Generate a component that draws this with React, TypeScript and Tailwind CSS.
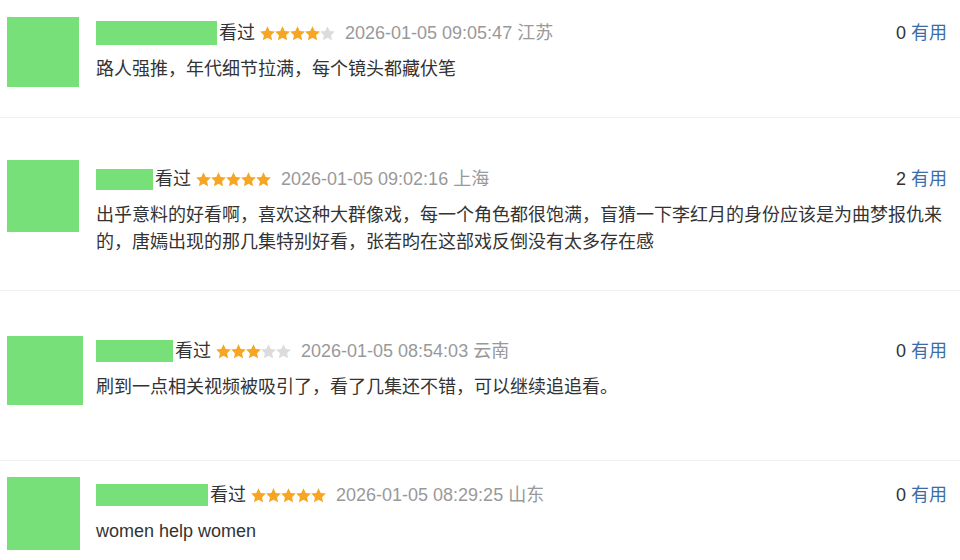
import React from 'react';

interface Review {
  nameWidth: number;
  nameHeight: number;
  avatarW: number;
  avatarH: number;
  rating: number;
  time: string;
  region: string;
  text: string;
  useful: number;
  padTop: number;
  padBottom: number;
  contentOffset: number;
  divider: boolean;
}

const reviews: Review[] = [
  {
    nameWidth: 121,
    nameHeight: 24,
    avatarW: 72,
    avatarH: 70,
    rating: 4,
    time: '2026-01-05 09:05:47',
    region: '江苏',
    text: '路人强推，年代细节拉满，每个镜头都藏伏笔',
    useful: 0,
    padTop: 17,
    padBottom: 30,
    contentOffset: 4,
    divider: true,
  },
  {
    nameWidth: 57,
    nameHeight: 21,
    avatarW: 72,
    avatarH: 72,
    rating: 5,
    time: '2026-01-05 09:02:16',
    region: '上海',
    text: '出乎意料的好看啊，喜欢这种大群像戏，每一个角色都很饱满，盲猜一下李红月的身份应该是为曲梦报仇来的，唐嫣出现的那几集特别好看，张若昀在这部戏反倒没有太多存在感',
    useful: 2,
    padTop: 42,
    padBottom: 34,
    contentOffset: 7,
    divider: true,
  },
  {
    nameWidth: 77,
    nameHeight: 22,
    avatarW: 76,
    avatarH: 69,
    rating: 3,
    time: '2026-01-05 08:54:03',
    region: '云南',
    text: '刷到一点相关视频被吸引了，看了几集还不错，可以继续追追看。',
    useful: 0,
    padTop: 45,
    padBottom: 55,
    contentOffset: 3,
    divider: true,
  },
  {
    nameWidth: 112,
    nameHeight: 22,
    avatarW: 73,
    avatarH: 73,
    rating: 5,
    time: '2026-01-05 08:29:25',
    region: '山东',
    text: 'women help women',
    useful: 0,
    padTop: 16,
    padBottom: 12,
    contentOffset: 6,
    divider: false,
  },
];

function Star({ on }: { on: boolean }) {
  return (
    <svg width="15" height="15" viewBox="1.5 1.5 21 21" className="shrink-0">
      <path
        d="M12 1.8l3.1 6.6 7.2.9-5.3 5 1.4 7.1L12 17.9l-6.4 3.5 1.4-7.1-5.3-5 7.2-.9z"
        fill={on ? '#f6a623' : '#dcdcdc'}
      />
    </svg>
  );
}

function Stars({ rating }: { rating: number }) {
  return (
    <div className="flex items-center">
      {[0, 1, 2, 3, 4].map((i) => (
        <Star key={i} on={i < rating} />
      ))}
    </div>
  );
}

function ReviewRow({ r }: { r: Review }) {
  return (
    <div
      className={`flex pl-[7px] pr-[13px] ${r.divider ? 'border-b border-[#eff1f3]' : ''}`}
      style={{ paddingTop: r.padTop, paddingBottom: r.padBottom }}
    >
      <div className="w-[89px] shrink-0">
        <div className="bg-[#78e079]" style={{ width: r.avatarW, height: r.avatarH }} />
      </div>
      <div className="min-w-0 flex-1" style={{ marginTop: r.contentOffset }}>
        <div className="flex h-6 items-center">
          <div className="shrink-0 bg-[#78e079]" style={{ width: r.nameWidth, height: r.nameHeight }} />
          <span className="ml-[2px] text-[18px] leading-6 text-[#333]">看过</span>
          <div className="ml-[5px]">
            <Stars rating={r.rating} />
          </div>
          <span className="ml-[10px] text-[18px] leading-6 text-[#999]">
            {r.time} {r.region}
          </span>
          <div className="ml-auto text-[18px] leading-6">
            <span className="text-[#333]">{r.useful}</span>{' '}
            <span className="text-[#3b6ea8]">有用</span>
          </div>
        </div>
        <p className="mt-[11px] text-[18px] leading-[27px] text-[#333]">{r.text}</p>
      </div>
    </div>
  );
}

export default function App() {
  return (
    <div className="h-[560px] w-[960px] overflow-hidden bg-white font-['Liberation_Sans','Noto_Sans_CJK_SC',sans-serif]">
      {reviews.map((r, i) => (
        <ReviewRow key={i} r={r} />
      ))}
    </div>
  );
}
